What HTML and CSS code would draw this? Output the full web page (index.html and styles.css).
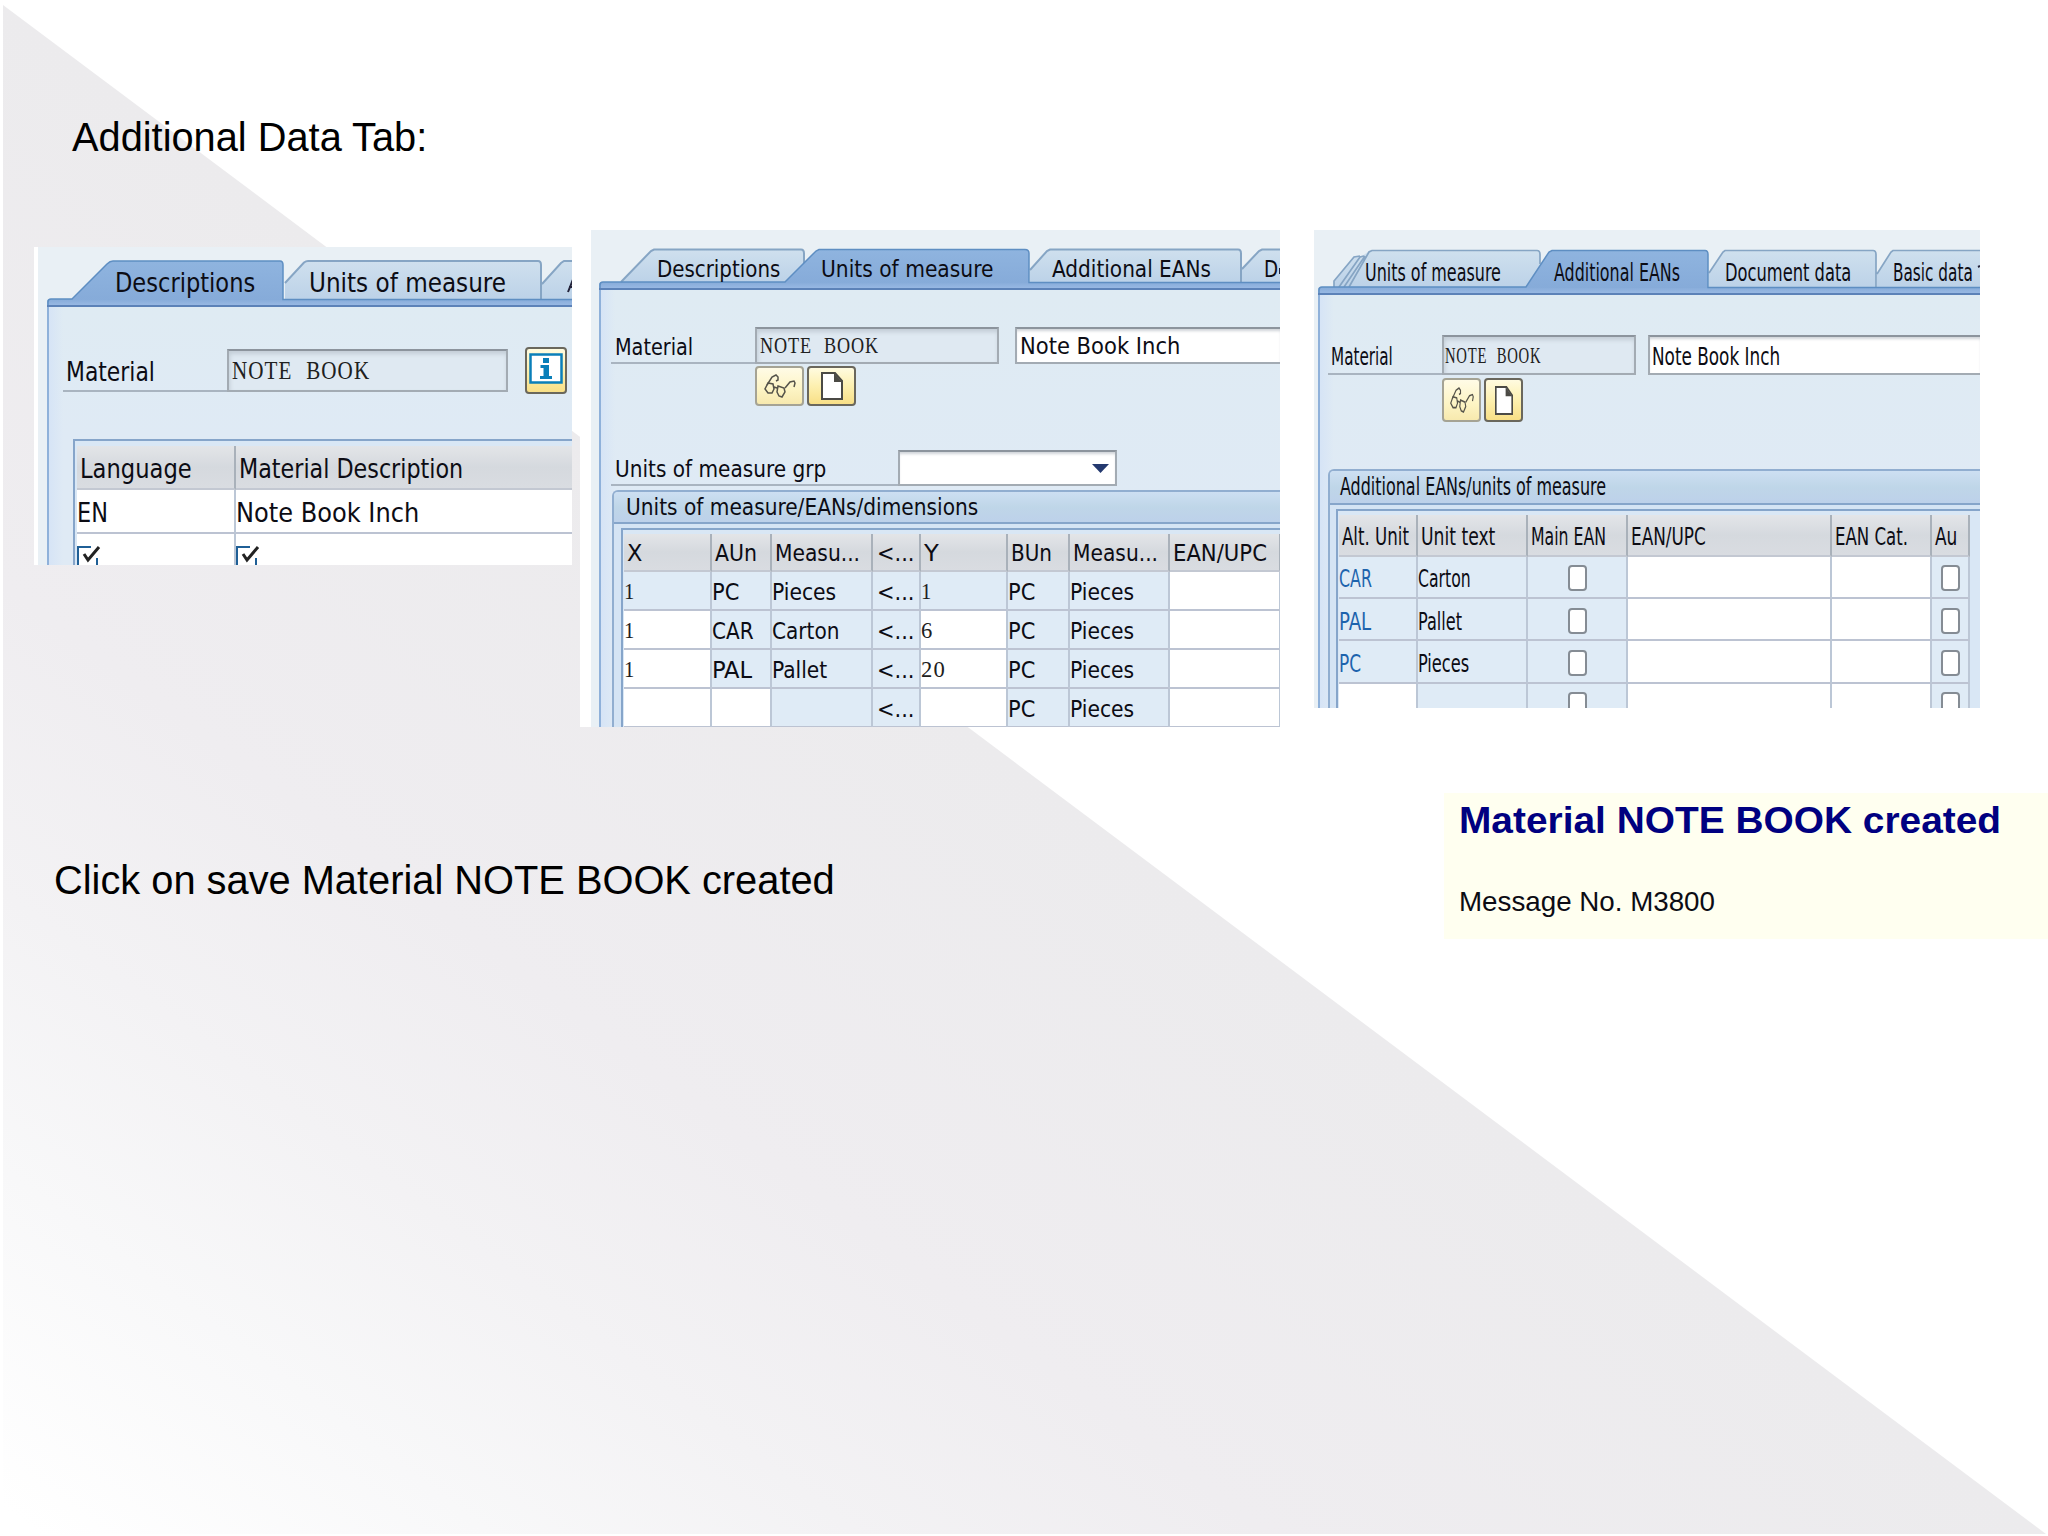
FILE: index.html
```html
<!DOCTYPE html>
<html lang="en">
<head>
<meta charset="utf-8">
<title>Additional Data Tab</title>
<link rel="stylesheet" href="styles.css">
</head>
<body>
<svg width="0" height="0" class="defs" aria-hidden="true">
  <defs>
    <linearGradient id="active" x1="0" y1="0" x2="0" y2="1"><stop offset="0" stop-color="#8fb4df"/><stop offset="1" stop-color="#86abd9"/></linearGradient>
    <linearGradient id="idle" x1="0" y1="0" x2="0" y2="1"><stop offset="0" stop-color="#cfe0ee"/><stop offset="1" stop-color="#bcd2e8"/></linearGradient>
    <linearGradient id="bar" x1="0" y1="0" x2="0" y2="1"><stop offset="0" stop-color="#86abd9"/><stop offset="1" stop-color="#9dbce6"/></linearGradient>
    <symbol id="glasses" viewBox="0 0 32 24" preserveAspectRatio="none">
      <g fill="none" stroke="#55534a" stroke-width="1.5"><path d="M3 11L8 3l4-2 2 2v3l-2 1M21 14l5-6 4-1 1 2-1 4"/><path d="M4 9l5 1 1 5-2 4-4 0-3-4zM14 12l6 2 1 4-3 5-3-1-2-4zM10 13l3 1"/></g>
    </symbol>
    <symbol id="page" viewBox="0 0 22 28" preserveAspectRatio="none">
      <path d="M1 1h13l7 8v18H1z" fill="#fff" stroke="#4b4a45" stroke-width="2"/><path d="M13 1v9h8z" fill="#4b4a45"/>
    </symbol>
    <symbol id="tick" viewBox="0 0 24 24">
      <path d="M14 1H1v22h19V12" fill="#fff" stroke="#1f5f96" stroke-width="2"/><path d="M7 8l4 6L22 1" fill="none" stroke="#222" stroke-width="3"/>
    </symbol>
  </defs>
</svg>
<main class="slide">
  <h1 class="heading"><span data-w="353">Additional Data Tab:</span></h1>

  <div class="shots">
    <section class="panel descriptions">
      <header class="tabs">
        <svg class="shape" width="534" height="60">
          <rect width="534" height="60" fill="#e9f0f5"/>
          <path d="M9 60V55q0-3 3-3H534v8z" fill="url(#bar)"/>
          <path d="M34 52.500L69 17q3-3 6-3H242q3 0 3 4V53z" fill="url(#active)"/>
          <path d="M247 52V36L266 15.500q2-1.500 4-1.500H500q3 0 3 4V52zM504 52V37L523 16l3-2h9v38z" fill="url(#idle)"/>
          <path d="M247 36L266 15.500q2-1.500 4-1.500H500q3 0 3 4V52M504 37L523 16l3-2h9" fill="none" stroke="#86a5c4" stroke-width="2"/>
          <path d="M530 45l6-15M531 40h5" fill="none" stroke="#23233a" stroke-width="2"/>
          <path d="M10 60V55q0-3 3-3H34L69 17q3-3 6-3H242q3 0 3 4V52.500H534" fill="none" stroke="#5e8ec2" stroke-width="1.500"/>
          <path d="M9 59H534" stroke="#5c82b8" stroke-width="2"/>
        </svg>
        <span data-w="138">Descriptions</span><span data-w="195">Units of measure</span>
      </header>
      <div class="body">
        <div class="field">
          <label><span data-w="87">Material</span></label>
          <div class="input locked"><span class="mono" data-w="136">NOTE BOOK</span></div>
          <button class="btn info" aria-label="Information">
            <svg width="34" height="31" viewBox="0 0 34 31"><rect x="1.500" y="1.500" width="31" height="28" fill="#fff" stroke="#0a7fb9" stroke-width="2.500"/><path d="M14 5h6v5h-6zM11.500 12H20v11h3v3H11v-3h3.500v-8h-3z" fill="#0a7fb9"/></svg>
          </button>
        </div>
        <div class="grid">
          <div class="row head"><div><span data-w="110">Language</span></div><div><span data-w="222">Material Description</span></div></div>
          <div class="row"><div class="w"><span data-w="29">EN</span></div><div class="w"><span data-w="181">Note Book Inch</span></div></div>
          <div class="row ticks"><div class="w"><svg width="24" height="24"><use href="#tick"/></svg></div><div class="w"><svg width="24" height="24"><use href="#tick"/></svg></div></div>
        </div>
      </div>
    </section>

    <section class="panel units">
      <header class="tabs">
        <svg class="shape" width="689" height="60">
          <rect width="689" height="60" fill="#e9f0f5"/>
          <path d="M8 60V55q0-3 3-3H689v8z" fill="url(#bar)"/>
          <path d="M30 52L60 21l3-1.500H210q3 0 3 4V52zM439 52V40L456 21l3-1.500H647q3 0 3 4V52zM651 52V39L668 21l3-1.500h19V52z" fill="url(#idle)"/>
          <path d="M30 52L60 21l3-1.500H210q3 0 3 4V34M439 40L456 21l3-1.500H647q3 0 3 4V52M651 39L668 21l3-1.500h19" fill="none" stroke="#86a5c4" stroke-width="2"/>
          <path d="M194 52.500L225 21l3-1.500H434q4 0 4 4V53z" fill="url(#active)"/>
          <path d="M9 60V55q0-3 3-3H194L225 21l3-1.500H434q4 0 4 4V52.500H689" fill="none" stroke="#5e8ec2" stroke-width="1.500"/>
          <path d="M8 59H689" stroke="#5c82b8" stroke-width="2"/>
          <path d="M689 38v6" stroke="#23233a" stroke-width="2"/>
        </svg>
        <span data-w="121">Descriptions</span><span data-w="170">Units of measure</span><span data-w="157">Additional EANs</span><span data-w="12">D</span>
      </header>
      <div class="body">
        <div class="field">
          <label><span data-w="76">Material</span></label>
          <div class="input locked"><span class="mono" data-w="117">NOTE BOOK</span></div>
          <div class="input open"><span data-w="158">Note Book Inch</span></div>
        </div>
        <div class="buttons">
          <button class="btn dim" aria-label="Display"><svg width="32" height="24"><use href="#glasses"/></svg></button>
          <button class="btn" aria-label="Create"><svg width="22" height="28"><use href="#page"/></svg></button>
        </div>
        <div class="field group">
          <label><span data-w="209">Units of measure grp</span></label>
          <div class="input select"><svg width="17" height="9"><path d="M0 0h17L8.500 9z" fill="#24396f"/></svg></div>
        </div>
        <div class="box">
          <h2><span data-w="350">Units of measure/EANs/dimensions</span></h2>
          <div class="grid">
            <div class="row head"><div><span data-w="13">X</span></div><div><span data-w="40">AUn</span></div><div><span data-w="83">Measu...</span></div><div><span data-w="36">&lt;...</span></div><div><span data-w="13">Y</span></div><div><span data-w="39">BUn</span></div><div><span data-w="83">Measu...</span></div><div><span data-w="92">EAN/UPC</span></div></div>
            <div class="row"><div><span class="mono" data-w="9">1</span></div><div><span data-w="25">PC</span></div><div><span data-w="62">Pieces</span></div><div><span data-w="36">&lt;...</span></div><div><span class="mono" data-w="9">1</span></div><div><span data-w="25">PC</span></div><div><span data-w="62">Pieces</span></div><div class="w"></div></div>
            <div class="row"><div class="w"><span class="mono" data-w="9">1</span></div><div><span data-w="40">CAR</span></div><div><span data-w="65">Carton</span></div><div><span data-w="36">&lt;...</span></div><div class="w"><span class="mono" data-w="10">6</span></div><div><span data-w="25">PC</span></div><div><span data-w="62">Pieces</span></div><div class="w"></div></div>
            <div class="row"><div class="w"><span class="mono" data-w="9">1</span></div><div><span data-w="38">PAL</span></div><div><span data-w="53">Pallet</span></div><div><span data-w="36">&lt;...</span></div><div class="w"><span class="mono" data-w="23">20</span></div><div><span data-w="25">PC</span></div><div><span data-w="62">Pieces</span></div><div class="w"></div></div>
            <div class="row"><div class="w"></div><div class="w"></div><div></div><div><span data-w="36">&lt;...</span></div><div class="w"></div><div><span data-w="25">PC</span></div><div><span data-w="62">Pieces</span></div><div class="w"></div></div>
          </div>
        </div>
      </div>
    </section>

    <section class="panel eans">
      <header class="tabs">
        <svg class="shape" width="666" height="65">
          <rect width="666" height="65" fill="#e9f0f5"/>
          <path d="M4 65V60q0-3 3-3H666v8z" fill="url(#bar)"/>
          <path d="M20 57v-6L40 26h8l8-5.500H223q3 0 3 4V57zM395 57V43L409 22l2-1.500H559q3 0 3 4V57zM563 57V44L577 22l2-1.500h90V57z" fill="url(#idle)"/>
          <path d="M20 57v-6L40 27l6-1M25 57L46 27l4-1M30 57L51 26M35 57L55 22l3-1.500H223q3 0 3 4V34M395 43L409 22l2-1.500H559q3 0 3 4V57M563 44L577 22l2-1.500h90" fill="none" stroke="#86a5c4" stroke-width="1.700"/>
          <path d="M212 57.500L235 22l3-1.500H391q3 0 3 4V58z" fill="url(#active)"/>
          <path d="M5 65V60q0-3 3-3H212L235 22l3-1.500H391q3 0 3 4V57.500H666" fill="none" stroke="#5e8ec2" stroke-width="1.500"/>
          <path d="M4 64H666" stroke="#5c82b8" stroke-width="2"/>
          <path d="M664 37l2-1" stroke="#23233a" stroke-width="2"/>
        </svg>
        <span data-w="134">Units of measure</span><span data-w="124">Additional EANs</span><span data-w="124">Document data</span><span data-w="78">Basic data</span>
      </header>
      <div class="body">
        <div class="field">
          <label><span data-w="60">Material</span></label>
          <div class="input locked"><span class="mono" data-w="94">NOTE BOOK</span></div>
          <div class="input open"><span data-w="126">Note Book Inch</span></div>
        </div>
        <div class="buttons">
          <button class="btn dim" aria-label="Display"><svg width="24" height="26"><use href="#glasses"/></svg></button>
          <button class="btn" aria-label="Create"><svg width="18" height="29"><use href="#page"/></svg></button>
        </div>
        <div class="box">
          <h2><span data-w="264">Additional EANs/units of measure</span></h2>
          <div class="grid">
            <div class="row head"><div><span data-w="65">Alt. Unit</span></div><div><span data-w="72">Unit text</span></div><div><span data-w="73">Main EAN</span></div><div><span data-w="73">EAN/UPC</span></div><div><span data-w="71">EAN Cat.</span></div><div><span data-w="20">Au</span></div></div>
            <div class="row"><div class="link"><span data-w="31">CAR</span></div><div><span data-w="51">Carton</span></div><div class="c"><i></i></div><div class="w"></div><div class="w"></div><div class="c"><i></i></div></div>
            <div class="row"><div class="link"><span data-w="30">PAL</span></div><div><span data-w="42">Pallet</span></div><div class="c"><i></i></div><div class="w"></div><div class="w"></div><div class="c"><i></i></div></div>
            <div class="row"><div class="link"><span data-w="20">PC</span></div><div><span data-w="49">Pieces</span></div><div class="c"><i></i></div><div class="w"></div><div class="w"></div><div class="c"><i></i></div></div>
            <div class="row"><div class="w"></div><div></div><div class="c"><i></i></div><div class="w"></div><div class="w"></div><div class="c"><i></i></div></div>
          </div>
        </div>
      </div>
    </section>
  </div>

  <div class="footer">
    <p class="heading"><span data-w="779">Click on save Material NOTE BOOK created</span></p>
    <aside class="message">
      <strong><span data-w="540">Material NOTE BOOK created</span></strong>
      <p><span data-w="254">Message No. M3800</span></p>
    </aside>
  </div>
</main>
<script src="fit.js"></script>
</body>
</html>
```
FILE: styles.css
```css
* { box-sizing: border-box; }
body { margin: 0; background: #fff; color: #0c0c14; }
.defs { display: block; }
h1, h2, p { margin: 0; font-weight: normal; }
svg { display: block; flex: none; }

.slide {
  position: relative;
  width: 2048px;
  height: 1536px;
  overflow: hidden;
  padding-top: 114px;
  isolation: isolate;
  font-family: "DejaVu Sans Condensed", "DejaVu Sans", sans-serif;
  font-stretch: condensed;
}
.slide::before {
  content: "";
  position: absolute;
  z-index: -1;
  inset: 0;
  background: linear-gradient(216.9deg, #ecebed 50%, #efedf0 69%, #f3f2f4 79%, #f8f8f9 88%, #fff 99%);
  clip-path: polygon(3px 5px, 2046px 1534px, 3px 1534px);
}
[data-w] { display: inline-block; white-space: pre; transform-origin: 0 50%; }
.mono { font-family: "Liberation Serif", serif; font-size: .97em; color: #202020; letter-spacing: .05em; word-spacing: .35em; }

.heading { font: 40px/46px "Liberation Sans", Arial, sans-serif; color: #000; }
h1.heading { padding-left: 73px; height: 116px; }

.shots { display: flex; align-items: flex-start; height: 497px; padding-left: 34px; }
.panel { display: flex; flex-direction: column; overflow: hidden; flex: none; background: #e9f0f5; }
.descriptions { width: 538px; height: 318px; margin-top: 17px; border-left: 4px solid #fff; font-size: 26.5px; }
.units { width: 700px; height: 497px; margin-left: 8px; border-left: 11px solid #fff; font-size: 23.3px; }
.eans { width: 666px; height: 478px; margin-left: 34px; font-size: 24px; }

.tabs { position: relative; z-index: 0; flex: none; display: grid; align-items: center; justify-items: start; height: 60px; padding-top: 12px; }
.shape { position: absolute; inset: 0; z-index: -1; }
.descriptions .tabs { grid-template-columns: 194px 258px; padding: 11px 0 0 78px; }
.units .tabs { grid-template-columns: 164px 231px 212px 20px; padding: 16px 0 0 67px; }
.eans .tabs { grid-template-columns: 189px 171px 168px 80px; height: 65px; padding: 20px 0 0 52px; }

.body { display: flow-root; flex: 1; min-height: 0; overflow: hidden; margin-left: 9px; border-left: 2px solid #8fb1da; background: linear-gradient(90deg, #d6e4f6, rgba(214, 228, 246, 0) 14px), linear-gradient(#dfebf3, #dfeaf5 50%); }
.units .body { margin-left: 8px; }
.eans .body { margin-left: 4px; }

.field { display: flex; }
.field label { display: flex; align-items: center; border-bottom: 2px solid #a9b4c0; padding-top: 3px; }
.input { display: flex; align-items: center; border: 2px solid #a3abb3; border-top-color: #8c949d; padding-left: 4px; background: #fff; box-shadow: inset 0 3px 3px -1px #cfd3d8; }
.locked { background: #dfe9f2; box-shadow: inset 1px 3px 4px #c3cdd6; }
.btn { display: flex; align-items: center; justify-content: center; padding: 0; border: 2px solid #6a675c; border-radius: 4px; background: linear-gradient(#fffbe0, #fdf0b0 50%, #f8df86); }
.btn.dim { border-color: #a5a394; background: linear-gradient(#fffbe6, #fdf4c4 60%, #f7e9ae); }

.descriptions .field { margin: 42px 0 0 14px; height: 43px; }
.descriptions label { width: 164px; padding-left: 4px; }
.descriptions .locked { width: 281px; }
.info { width: 42px; height: 47px; margin: -2px 0 0 17px; align-items: flex-start; padding-top: 4px; }

.units .field { margin: 37px 0 0 10px; height: 37px; }
.units label { width: 144px; padding-left: 5px; }
.units .locked { width: 244px; }
.open { border-right: 0; flex: 1; margin-left: 16px; }
.buttons { display: flex; gap: 3px; }
.units .buttons { margin: 2px 0 0 154px; height: 40px; }
.units .btn { width: 49px; }
.units .field.group { margin-top: 44px; height: 36px; }
.units .group label { width: 287px; }
.select { width: 219px; justify-content: flex-end; padding-right: 6px; }

.eans .field { margin: 40px 0 0 8px; height: 40px; }
.eans label { width: 114px; padding-left: 4px; padding-top: 5px; }
.eans .locked { width: 194px; padding-left: 2px; }
.eans .open { margin-left: 12px; padding: 3px 0 0 3px; }
.eans .buttons { margin: 3px 0 0 122px; height: 44px; }
.eans .btn { width: 39px; }

.box { border: 2px solid #91aed0; border-right: 0; border-radius: 6px 0 0 0; background: #d5e4f4; height: 300px; }
.box h2 { display: flex; align-items: center; font-size: 1em; border-bottom: 2px solid #86a5ca; border-radius: 4px 0 0 0; background: linear-gradient(#cddff2, #bfd6e8 50%, #bdd1ea); }
.units .box { margin: 4px 0 0 11px; }
.units h2 { height: 32px; padding: 0 0 2px 13px; }
.eans .box { margin: 47px 0 0 8px; }
.eans h2 { height: 34px; padding: 0 0 1px 11px; }

.grid { border: 2px solid #86a5ca; border-right: 0; background: #d9e7f5; }
.descriptions .grid { margin: 47px 0 0 24px; padding: 5px 0 0 2px; height: 200px; }
.units .grid { margin: 4px 0 0 7px; padding: 4px 0 0 1px; height: 250px; }
.eans .grid { margin: 4px 0 0 6px; padding: 4px 0 0 1px; height: 250px; }
.row { display: grid; }
.row > div { display: flex; align-items: center; min-width: 0; padding: 2px 0 0 1px; background: #dfebf6; border-right: 2px solid #bcc7d6; border-bottom: 2px solid #bcc3d2; }
.row > .w { background: #fff; }
.head > div { padding: 0 0 0 4px; background: linear-gradient(#e3e5e8, #d5d9de 50%, #d9dce1); border-right-color: #a9b1ba; border-bottom-color: #c3c8d2; }
.descriptions .row { grid-template-columns: 159px 340px; height: 44px; }
.descriptions .row > div { padding-top: 3px; }
.descriptions .row.ticks > div { align-items: flex-start; padding: 12px 0 0; }
.units .row { grid-template-columns: 88px 60px 101px 48px 87px 62px 100px 111px; height: 39px; }
.units .head { height: 38px; }
.units .row > :nth-child(4) { padding-left: 5px; }
.units .head > div, .descriptions .head > div { padding-left: 4px; }
.eans .row { grid-template-columns: 79px 110px 100px 204px 100px 38px; height: 42.4px; }
.eans .row > div { padding-top: 5px; }
.eans .head { height: 41.5px; }
.eans .head > div { padding: 4px 0 0 4px; }
.eans .row > .link { color: #1d63ad; }
.eans .row > .c { justify-content: center; padding: 3px 0 0; }
.c i { width: 19px; height: 26px; border: 2px solid #858c94; border-radius: 4px; background: #fff; }

.footer { display: flex; justify-content: space-between; align-items: flex-start; padding: 66px 0 0 55px; }
.footer .heading { margin-top: 64px; }
.message { width: 604px; height: 146px; padding: 6px 0 0 16px; background: #fffff0; font-family: "Liberation Sans", Arial, sans-serif; }
.message strong { display: block; font-size: 37.5px; line-height: 42px; color: #000080; }
.message p { font-size: 28.5px; line-height: 32px; margin-top: 44px; }
```
FILE: fit.js
```js
document.querySelectorAll('[data-w]').forEach(function (el) {
  var natural = el.offsetWidth;
  var target = Number(el.dataset.w) + 2;
  el.style.transform = 'translateX(-1px) scaleX(' + (target / natural).toFixed(4) + ')';
  el.style.marginRight = (target - natural) + 'px';
});
```
